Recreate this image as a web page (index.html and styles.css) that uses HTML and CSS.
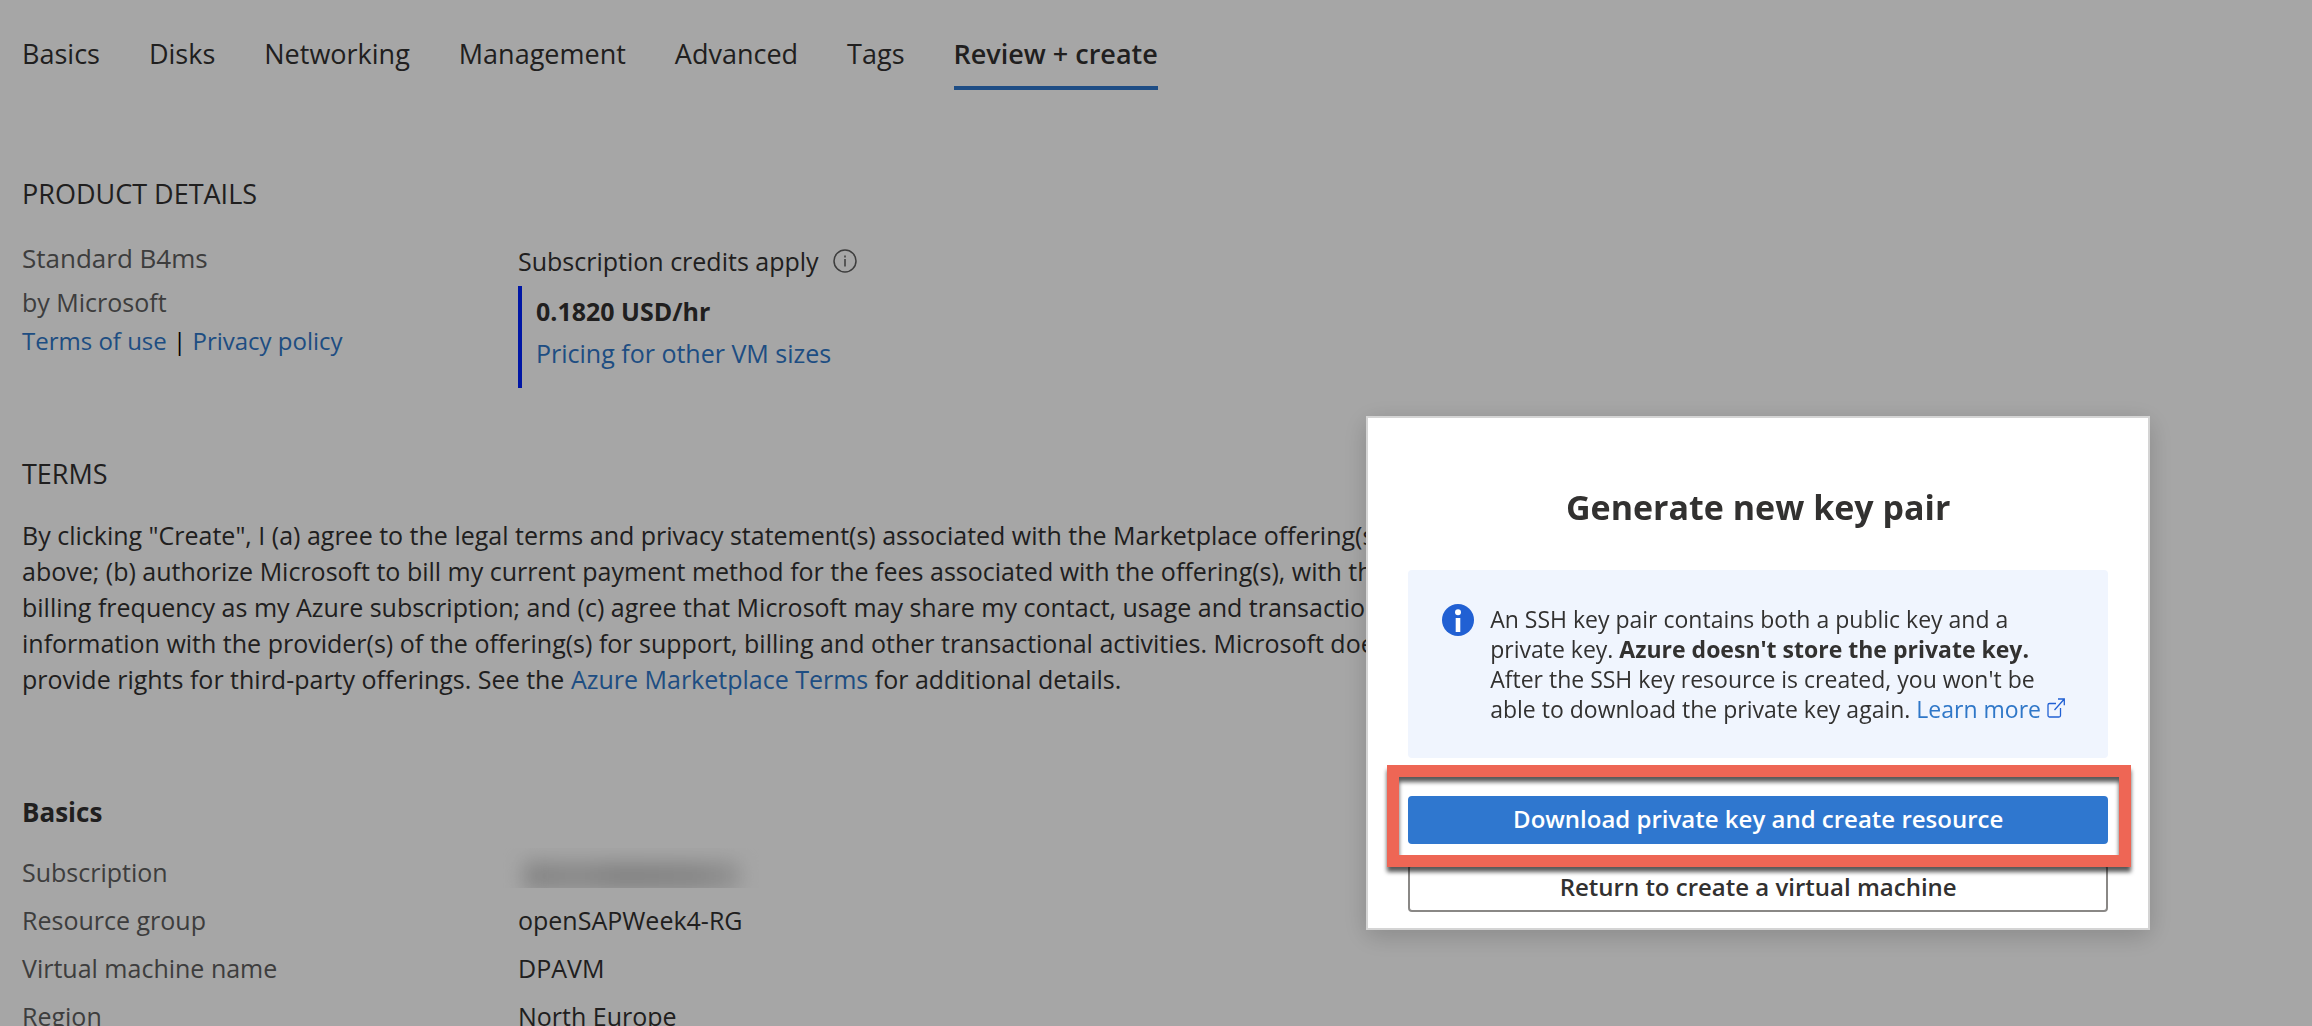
FILE: index.html
```html
<!DOCTYPE html>
<html lang="en">
<head>
<meta charset="utf-8">
<meta name="viewport" content="width=device-width, initial-scale=1">
<title>Create a virtual machine</title>
<link rel="stylesheet" href="styles.css">
</head>
<body>
<main class="page">
  <nav class="tabs" aria-label="Wizard steps">
    <button class="tab" type="button">Basics</button>
    <button class="tab" type="button">Disks</button>
    <button class="tab" type="button">Networking</button>
    <button class="tab" type="button">Management</button>
    <button class="tab" type="button">Advanced</button>
    <button class="tab" type="button">Tags</button>
    <button class="tab tab-active" type="button" aria-current="step">Review + create</button>
  </nav>

  <section class="product">
    <h2 class="section-title">PRODUCT DETAILS</h2>
    <div class="columns">
      <div class="offer">
        <p class="offer-name">Standard B4ms</p>
        <p class="offer-by">by Microsoft</p>
        <p class="offer-links"><a href="#terms">Terms of use</a> | <a href="#privacy">Privacy policy</a></p>
      </div>
      <div class="price">
        <p class="price-label">Subscription credits apply
          <svg class="price-info" viewBox="0 0 24 24" aria-hidden="true"><circle cx="12" cy="12" r="11" fill="none" stroke="currentColor" stroke-width="1.5"/><path d="M12 10v7.500M12 6.500v2" stroke="currentColor" stroke-width="1.500"/></svg>
        </p>
        <div class="price-box">
          <p class="price-value">0.1820 USD/hr</p>
          <p><a href="#pricing">Pricing for other VM sizes</a></p>
        </div>
      </div>
    </div>
  </section>

  <section class="terms">
    <h2 class="section-title">TERMS</h2>
    <p class="terms-text">By clicking "Create", I (a) agree to the legal terms and privacy statement(s) associated with the Marketplace offering(s) listed above; (b) authorize Microsoft to bill my current payment method for the fees associated with the offering(s), with the same billing frequency as my Azure subscription; and (c) agree that Microsoft may share my contact, usage and transactional information with the provider(s) of the offering(s) for support, billing and other transactional activities. Microsoft does not provide rights for third-party offerings. See the <a href="#marketplace">Azure Marketplace Terms</a> for additional details.</p>
  </section>

  <section class="summary">
    <h2 class="summary-title">Basics</h2>
    <dl class="summary-list">
      <dt>Subscription</dt><dd><span class="redacted"></span></dd>
      <dt>Resource group</dt><dd>openSAPWeek4-RG</dd>
      <dt>Virtual machine name</dt><dd>DPAVM</dd>
      <dt>Region</dt><dd>North Europe</dd>
    </dl>
  </section>
</main>

<div class="overlay">
  <div class="dialog" role="dialog" aria-modal="true" aria-labelledby="dialog-title">
    <h1 class="dialog-title" id="dialog-title">Generate new key pair</h1>
    <div class="notice">
      <svg class="notice-icon" viewBox="0 0 32 32" aria-hidden="true"><circle cx="16" cy="16" r="16" fill="#2160d3"/><circle cx="16" cy="8.200" r="3" fill="#fff"/><path d="M13.700 14h4.600v14h-4.600z" fill="#fff"/></svg>
      <p class="notice-text">An SSH key pair contains both a public key and a private key. <strong>Azure doesn't store the private key.</strong> After the SSH key resource is created, you won't be able to download the private key again. <a href="#learn">Learn more <svg class="external" viewBox="0 0 18 20" aria-hidden="true"><path d="M9 5.500H2.500a1.500 1.500 0 0 0-1.500 1.500v10.500a1.500 1.500 0 0 0 1.500 1.500h9.500a1.500 1.500 0 0 0 1.500-1.500V10M11 1h6.300v6.300M17.300 1L7.500 12" fill="none" stroke="#2160d3" stroke-width="1.300"/></svg></a></p>
    </div>
    <div class="actions">
      <div class="highlighted">
        <button class="button button-primary" type="button">Download private key and create resource</button>
        <span class="highlight"></span>
      </div>
      <button class="button" type="button">Return to create a virtual machine</button>
    </div>
  </div>
</div>
</body>
</html>
```
FILE: styles.css
```css
* {
  box-sizing: border-box;
}

body {
  margin: 0;
  overflow: hidden;
  background: #fff;
  color: #323130;
  font-family: "Open Sans", "Noto Sans", sans-serif;
  font-size: 25px;
  line-height: 36px;
}

h1, h2, p, dl, dd {
  margin: 0;
}

a {
  color: #2f77c8;
  text-decoration: none;
}

button {
  font: inherit;
  color: inherit;
}

.page {
  padding: 36px 22px 0;
}

/* Wizard tabs */
.tabs {
  display: flex;
  gap: 49px;
}

.tab {
  padding: 0 0 14px;
  border: 0;
  border-bottom: 4px solid transparent;
  background: none;
  font-size: 27px;
  white-space: nowrap;
}

.tab-active {
  border-bottom-color: #2f77cc;
  font-weight: 600;
}

.section-title {
  font-size: 27px;
  font-weight: 400;
}

/* Product details */
.product {
  margin-top: 86px;
}

.columns {
  display: grid;
  grid-template-columns: 496px 1fr;
  margin-top: 24px;
}

.offer-name {
  color: #5e5e5e;
  font-size: 26px;
  line-height: 44px;
}

.offer-by {
  color: #5e5e5e;
  line-height: 44px;
}

.offer-links {
  color: #000;
  font-size: 24px;
  line-height: 34px;
}

.price-label {
  display: flex;
  align-items: center;
  gap: 14px;
  padding-top: 3px;
  line-height: 44px;
}

.price-info {
  width: 24px;
  height: 24px;
  color: #5e5e5e;
}

.price-box {
  height: 102px;
  margin-top: 3px;
  padding: 4px 0 0 14px;
  border-left: 4px solid #0023fe;
  line-height: 42px;
}

.price-value {
  font-weight: 700;
}

/* Terms */
.terms {
  margin-top: 68px;
}

.terms-text {
  max-width: 1450px;
  margin-top: 25px;
}

/* Summary */
.summary {
  margin-top: 97px;
}

.summary-title {
  font-size: 26px;
  font-weight: 700;
}

.summary-list {
  display: grid;
  grid-template-columns: 496px 1fr;
  margin-top: 18px;
  line-height: 48px;
}

.summary-list dt {
  color: #5e5e5e;
}

.redacted {
  display: block;
  width: 276px;
  height: 40px;
  margin-left: -18px;
  padding: 14px 36px 0 24px;
  overflow: hidden;
}

.redacted::before {
  content: "";
  display: block;
  height: 28px;
  background: linear-gradient(90deg, #cacaca, #d4d4d4 25%, #c8c8c8 45%, #cdcdcd 80%, #e0e0e0);
  filter: blur(10px);
}

/* Key pair dialog */
.overlay {
  position: fixed;
  inset: 0;
  display: flex;
  align-items: flex-start;
  justify-content: flex-end;
  padding: 416px 7vw 0 0;
  background: rgba(0, 0, 0, 0.35);
}

.dialog {
  width: 784px;
  padding: 65px 40px 16px;
  border: 2px solid #d4d4d4;
  background: #fff;
  box-shadow: 0 6px 24px rgba(0, 0, 0, 0.18);
}

.dialog-title {
  font-size: 34px;
  font-weight: 700;
  line-height: 48px;
  text-align: center;
}

.notice {
  display: flex;
  gap: 16px;
  margin-top: 39px;
  padding: 34px 30px 34px 34px;
  border-radius: 4px;
  background: #f0f5fe;
  font-size: 23px;
  line-height: 30px;
}

.notice-icon {
  flex: none;
  width: 32px;
  height: 32px;
}

.external {
  width: 18px;
  height: 20px;
}

.actions {
  display: grid;
  gap: 20px;
  margin-top: 38px;
}

.highlighted {
  position: relative;
  display: grid;
}

.button {
  height: 48px;
  padding-bottom: 4px;
  border: 2px solid #8a8886;
  border-radius: 4px;
  background: #fff;
  font-size: 24px;
  font-weight: 600;
}

.button-primary {
  border-color: #2f77cf;
  background: #2f77cf;
  color: #fff;
}

.highlight {
  position: absolute;
  inset: -31px -23px -23px -21px;
  border: 12px solid #ee6655;
  filter: drop-shadow(0 5px 2px rgba(0, 0, 0, 0.65));
  pointer-events: none;
}
```
